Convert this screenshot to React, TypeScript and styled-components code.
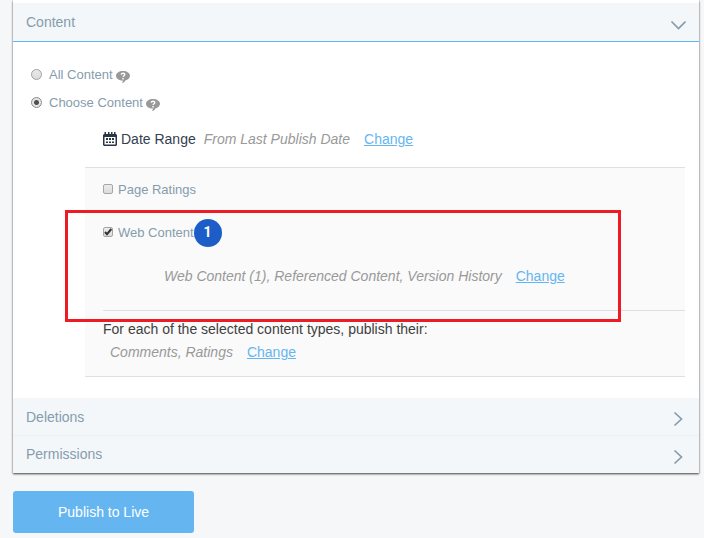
import React, { useState } from "react";
import styled, { createGlobalStyle } from "styled-components";

const GlobalStyle = createGlobalStyle`
  *, *::before, *::after { box-sizing: border-box; }
  body {
    margin: 0;
    background: #f5f7f8;
    color: #34404f;
    font: 14px/20px "Liberation Sans", Arial, sans-serif;
  }
`;

const Page = styled.main`
  padding: 0 5px 5px 13px;
`;

const Card = styled.section`
  padding-top: 3px;
  background: #fff;
  box-shadow: 0 1px 2px rgba(0, 0, 0, 0.75);
`;

const SectionHeader = styled.button<{ $open?: boolean }>`
  display: flex;
  align-items: center;
  justify-content: space-between;
  width: 100%;
  height: ${(p) => (p.$open ? 39 : 38)}px;
  padding: 0 13px;
  border: 0;
  border-bottom: 1px solid ${(p) => (p.$open ? "#65b6f0" : "#ebf0f3")};
  background: #f3f7fa;
  color: #869cad;
  font: inherit;
  text-align: left;
  cursor: pointer;
  &:last-child { height: 37px; padding-bottom: 1px; border-bottom: 0; }
`;

const ChevronSvg = styled.svg`
  width: 16px;
  height: 16px;
  margin-top: 5px;
  fill: none;
  stroke: #869cad;
  stroke-width: 1.7;
`;

const SectionBody = styled.div`
  padding: 23px 14px 21px 18px;
`;

const Choice = styled.label<{ $box?: boolean }>`
  display: flex;
  align-items: center;
  gap: ${(p) => (p.$box ? 5 : 7)}px;
  color: #869cad;
  font-size: 13px;
`;

const RadioRow = styled.div`
  display: flex;
  align-items: center;
  gap: 3px;
  height: 20px;
  margin-bottom: 8px;
`;

const Radio = styled.input`
  appearance: none;
  width: 11px;
  height: 11px;
  margin: 0 0 1px;
  border: 1px solid #a0a0a0;
  border-radius: 50%;
  background: linear-gradient(#e9e9e9, #dcdcdc);
  &:checked {
    border-color: #888;
    background: radial-gradient(circle, #505050 0 2px, #e6e6e6 3px);
  }
`;

const CheckFrame = styled.span`
  display: grid;
  width: 10px;
  height: 10px;
  margin-bottom: 2px;
  & > * { grid-area: 1 / 1; }
`;

const Checkbox = styled.input`
  appearance: none;
  width: 10px;
  height: 10px;
  margin: 0;
  border: 1px solid #a6a6a6;
  border-radius: 2px;
  background: linear-gradient(#ececec, #dcdcdc);
  & + svg { display: none; pointer-events: none; }
  &:checked + svg { display: block; }
`;

const HelpButton = styled.button`
  display: flex;
  padding: 3px 0 0;
  border: 0;
  background: none;
`;

const Details = styled.div`
  margin-left: 54px;
`;

const DateRow = styled.div`
  display: flex;
  align-items: center;
  height: 20px;
  margin: 16px 0 18px;
  padding-left: 18px;
  gap: 4px;
`;

const Summary = styled.em`
  margin: 0 10px 0 4px;
  color: #999;
`;

const ChangeLink = styled.a`
  color: #65b6f0;
  text-decoration: underline;
`;

const ContentTypes = styled.div`
  padding-left: 18px;
  border-top: 1px solid #e0e0e0;
  border-bottom: 1px solid #e0e0e0;
  background: #fafafa;
`;

const RatingsRow = styled.div`
  display: flex;
  align-items: flex-start;
  height: 42px;
  padding-top: 12px;
`;

const WebContent = styled.div`
  position: relative;
  height: 101px;
  padding-top: 9px;
  border-bottom: 1px solid #e0e0e0;
`;

const WebContentRow = styled.div`
  display: flex;
  align-items: center;
  height: 28px;
`;

const Badge = styled.span`
  width: 28px;
  height: 28px;
  border-radius: 50%;
  background: #1c5dc8;
  color: #fff;
  font: bold 14px/26px Roboto, sans-serif;
  text-align: center;
`;

const WebSummary = styled.div`
  display: flex;
  gap: 4px;
  padding: 19px 0 0 57px;
`;

const Highlight = styled.div`
  position: absolute;
  inset: 0 64px -12px -38px;
  border: 3px solid #ed1c24;
  pointer-events: none;
`;

const Related = styled.div`
  padding: 8px 0 14px;
  color: #404040;
`;

const RelatedTitle = styled.p`
  margin: 0;
`;

const RelatedSummary = styled.div`
  display: flex;
  gap: 4px;
  padding: 3px 0 0 3px;
`;

const PublishButton = styled.button`
  height: 42px;
  margin-top: 18px;
  padding: 0 45px;
  border: 0;
  border-radius: 3px;
  background: #65b6f0;
  color: #fff;
  font: inherit;
  cursor: pointer;
`;

const Chevron = ({ open }: { open?: boolean }) => (
  <ChevronSvg viewBox="0 0 16 16" aria-hidden="true">
    <path d={open ? "M1.500 4.500l7 7 7-7" : "M4.500 1.500l7 6.500-7 6.500"} />
  </ChevronSvg>
);

const HelpIcon = () => (
  <svg width="14" height="12" viewBox="0 0 14 12" aria-hidden="true">
    <path fill="#999" d="M7 0c3.9 0 7 2.1 7 4.8 0 2.300-2 4-4.700 4.600-.6 1.300-1.700 2.200-3.300 2.500.6-.7.9-1.400.9-2.300C3.100 9.600 0 7.600 0 4.800 0 2.100 3.100 0 7 0z" />
    <path fill="none" stroke="#fff" strokeWidth="1.400" d="M5.200 3.600c.2-1.900 3.700-1.800 3.600 0-.1 1.200-1.700 1.100-1.700 2.500" />
    <path fill="#fff" d="M6.300 7h1.500v1.400H6.300z" />
  </svg>
);

const CalendarIcon = () => (
  <svg width="14" height="14" viewBox="0 0 14 14" aria-hidden="true">
    <path
      fill="#2b3645"
      fillRule="evenodd"
      d="M1.500 0h1.500v2h2V0h1.500v2h1.500V0h1.500v2h1.500V0h1.500v2H13l1 1v10l-1 1H1l-1-1V3l1-1h.5zM1.500 5v7.500h11V5z"
    />
    <path
      fill="#2b3645"
      d="M3 6h2v2H3zm3 0h2v2H6zm3 0h2v2H9zM3 9.500h2v1.500H3zm3 0h2v1.500H6zm3 0h2v1.500H9z"
    />
  </svg>
);

interface CheckProps {
  label: string;
  initial?: boolean;
}

const CheckChoice = ({ label, initial = false }: CheckProps) => (
  <Choice $box>
    <CheckFrame>
      <Checkbox type="checkbox" defaultChecked={initial} />
      <svg width="10" height="10" viewBox="0 0 10 10" aria-hidden="true">
        <path d="M2 5l2 2.200L8.300 2" fill="none" stroke="#333" strokeWidth="2" />
      </svg>
    </CheckFrame>
    {label}
  </Choice>
);

const options = ["All Content", "Choose Content"];

export default function App() {
  const [selected, setSelected] = useState("Choose Content");
  return (
    <>
      <GlobalStyle />
      <Page>
        <Card>
          <SectionHeader $open aria-expanded="true">
            Content
            <Chevron open />
          </SectionHeader>
          <SectionBody>
            {options.map((option) => (
              <RadioRow key={option}>
                <Choice>
                  <Radio
                    type="radio"
                    name="content"
                    checked={selected === option}
                    onChange={() => setSelected(option)}
                  />
                  {option}
                </Choice>
                <HelpButton type="button" aria-label={`Help: ${option}`}>
                  <HelpIcon />
                </HelpButton>
              </RadioRow>
            ))}
            <Details>
              <DateRow>
                <CalendarIcon />
                <span>Date Range</span>
                <Summary>From Last Publish Date</Summary>
                <ChangeLink href="#date-range">Change</ChangeLink>
              </DateRow>
              <ContentTypes>
                <RatingsRow>
                  <CheckChoice label="Page Ratings" />
                </RatingsRow>
                <WebContent>
                  <WebContentRow>
                    <CheckChoice label="Web Content" initial />
                    <Badge>1</Badge>
                  </WebContentRow>
                  <WebSummary>
                    <Summary>Web Content (1), Referenced Content, Version History</Summary>
                    <ChangeLink href="#web-content">Change</ChangeLink>
                  </WebSummary>
                  <Highlight />
                </WebContent>
                <Related>
                  <RelatedTitle>For each of the selected content types, publish their:</RelatedTitle>
                  <RelatedSummary>
                    <Summary>Comments, Ratings</Summary>
                    <ChangeLink href="#related">Change</ChangeLink>
                  </RelatedSummary>
                </Related>
              </ContentTypes>
            </Details>
          </SectionBody>
          <SectionHeader aria-expanded="false">
            Deletions
            <Chevron />
          </SectionHeader>
          <SectionHeader aria-expanded="false">
            Permissions
            <Chevron />
          </SectionHeader>
        </Card>
        <PublishButton type="button">Publish to Live</PublishButton>
      </Page>
    </>
  );
}
